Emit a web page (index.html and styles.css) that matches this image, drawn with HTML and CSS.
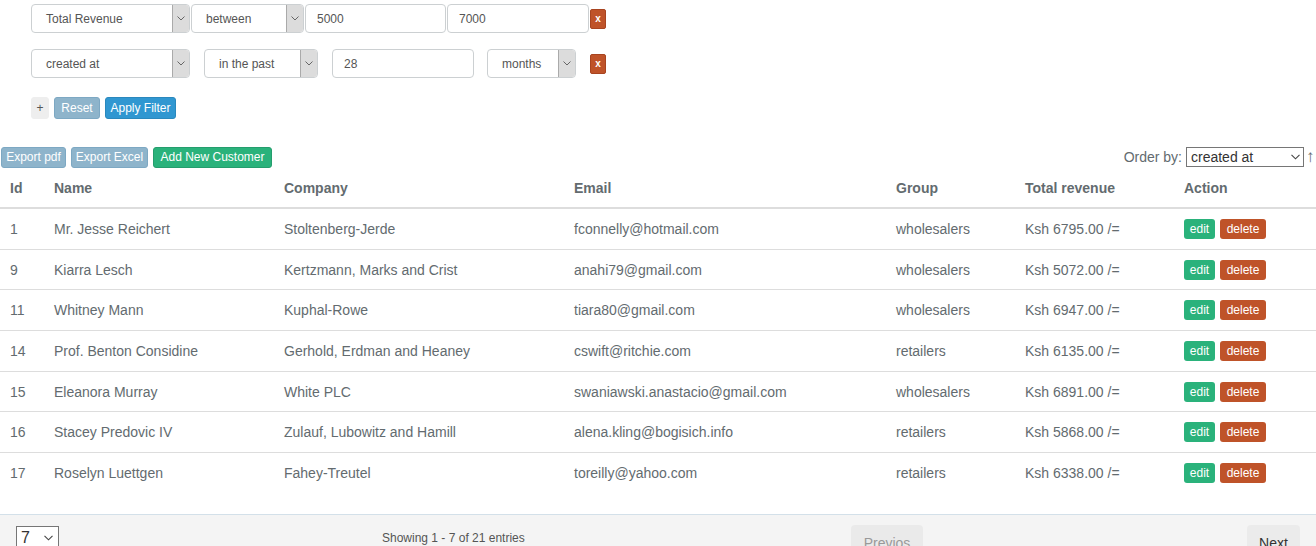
FILE: index.html
```html
<!DOCTYPE html>
<html>
<head>
<meta charset="utf-8">
<link rel="stylesheet" href="styles.css">
</head>
<body>
<div class="filters">
  <div class="frow r1">
    <div class="sel w159"><span class="sv">Total Revenue</span><span class="arr"><svg width="8" height="5" viewBox="0 0 8 5"><path d="M0.5 0.5 L4 4 L7.5 0.5" fill="none" stroke="#666" stroke-width="1"/></svg></span></div>
    <div class="sel w113"><span class="sv">between</span><span class="arr"><svg width="8" height="5" viewBox="0 0 8 5"><path d="M0.5 0.5 L4 4 L7.5 0.5" fill="none" stroke="#666" stroke-width="1"/></svg></span></div>
    <div class="inp w141">5000</div>
    <div class="inp w142">7000</div>
    <button class="xbtn">x</button>
  </div>
  <div class="frow r2">
    <div class="sel w159"><span class="sv">created at</span><span class="arr"><svg width="8" height="5" viewBox="0 0 8 5"><path d="M0.5 0.5 L4 4 L7.5 0.5" fill="none" stroke="#666" stroke-width="1"/></svg></span></div>
    <div class="sel w114"><span class="sv">in the past</span><span class="arr"><svg width="8" height="5" viewBox="0 0 8 5"><path d="M0.5 0.5 L4 4 L7.5 0.5" fill="none" stroke="#666" stroke-width="1"/></svg></span></div>
    <div class="inp w142">28</div>
    <div class="sel w89"><span class="sv">months</span><span class="arr"><svg width="8" height="5" viewBox="0 0 8 5"><path d="M0.5 0.5 L4 4 L7.5 0.5" fill="none" stroke="#666" stroke-width="1"/></svg></span></div>
    <button class="xbtn">x</button>
  </div>
  <div class="frow r3">
    <button class="btn btn-default">+</button>
    <button class="btn btn-info">Reset</button>
    <button class="btn btn-primary">Apply Filter</button>
  </div>
</div>

<div class="toolbar">
  <div class="tleft">
    <button class="btn btn-info">Export pdf</button>
    <button class="btn btn-info">Export Excel</button>
    <button class="btn btn-success">Add New Customer</button>
  </div>
  <div class="tright">
    <span class="olabel">Order by:</span>
    <div class="osel"><span>created at</span><svg width="9" height="6" viewBox="0 0 9 6"><path d="M0.5 0.8 L4.5 4.8 L8.5 0.8" fill="none" stroke="#444" stroke-width="1.1"/></svg></div>
    <span class="oarrow">↑</span>
  </div>
</div>

<table class="tbl">
  <colgroup>
    <col style="width:44px"><col style="width:230px"><col style="width:290px"><col style="width:322px"><col style="width:129px"><col style="width:159px"><col>
  </colgroup>
  <thead>
    <tr><th>Id</th><th>Name</th><th>Company</th><th>Email</th><th>Group</th><th>Total revenue</th><th>Action</th></tr>
  </thead>
  <tbody>
    <tr><td>1</td><td>Mr. Jesse Reichert</td><td>Stoltenberg-Jerde</td><td>fconnelly@hotmail.com</td><td>wholesalers</td><td>Ksh 6795.00 /=</td><td class="act"><button class="sbtn btn-success">edit</button><button class="sbtn btn-danger">delete</button></td></tr>
    <tr><td>9</td><td>Kiarra Lesch</td><td>Kertzmann, Marks and Crist</td><td>anahi79@gmail.com</td><td>wholesalers</td><td>Ksh 5072.00 /=</td><td class="act"><button class="sbtn btn-success">edit</button><button class="sbtn btn-danger">delete</button></td></tr>
    <tr><td>11</td><td>Whitney Mann</td><td>Kuphal-Rowe</td><td>tiara80@gmail.com</td><td>wholesalers</td><td>Ksh 6947.00 /=</td><td class="act"><button class="sbtn btn-success">edit</button><button class="sbtn btn-danger">delete</button></td></tr>
    <tr><td>14</td><td>Prof. Benton Considine</td><td>Gerhold, Erdman and Heaney</td><td>cswift@ritchie.com</td><td>retailers</td><td>Ksh 6135.00 /=</td><td class="act"><button class="sbtn btn-success">edit</button><button class="sbtn btn-danger">delete</button></td></tr>
    <tr><td>15</td><td>Eleanora Murray</td><td>White PLC</td><td>swaniawski.anastacio@gmail.com</td><td>wholesalers</td><td>Ksh 6891.00 /=</td><td class="act"><button class="sbtn btn-success">edit</button><button class="sbtn btn-danger">delete</button></td></tr>
    <tr><td>16</td><td>Stacey Predovic IV</td><td>Zulauf, Lubowitz and Hamill</td><td>alena.kling@bogisich.info</td><td>retailers</td><td>Ksh 5868.00 /=</td><td class="act"><button class="sbtn btn-success">edit</button><button class="sbtn btn-danger">delete</button></td></tr>
    <tr><td>17</td><td>Roselyn Luettgen</td><td>Fahey-Treutel</td><td>toreilly@yahoo.com</td><td>retailers</td><td>Ksh 6338.00 /=</td><td class="act"><button class="sbtn btn-success">edit</button><button class="sbtn btn-danger">delete</button></td></tr>
  </tbody>
</table>

<div class="footer">
  <div class="fc1"><div class="psel"><span>7</span><svg width="9" height="6" viewBox="0 0 9 6"><path d="M0.5 0.8 L4.5 4.8 L8.5 0.8" fill="none" stroke="#444" stroke-width="1.1"/></svg></div></div>
  <div class="fc2">Showing 1 - 7 of 21 entries</div>
  <div class="fc3"><button class="pbtn disabled">Previos</button></div>
  <div class="fc4"><button class="pbtn">Next</button></div>
</div>
</body>
</html>
```
FILE: styles.css
```css
* { box-sizing: border-box; }
html, body { margin: 0; padding: 0; background: #fff; }
body {
  font-family: "Liberation Sans", Arial, Helvetica, sans-serif;
  color: #636b6f;
  font-size: 14px;
  width: 1316px;
  height: 546px;
  overflow: hidden;
}
button { font-family: inherit; cursor: pointer; }

.filters { padding: 4px 0 0 31px; }
.frow { display: flex; align-items: center; }
.r1 { height: 29px; gap: 1px; }
.r2 { height: 29px; margin-top: 16px; gap: 14px; }
.r2 .inp { margin-right: -1px; }
.r3 { margin-top: 19px; gap: 4px; height: 22px; }

.sel, .inp {
  height: 29px;
  border: 1px solid #ccd0d2;
  border-radius: 4px;
  background: #fff;
  font-size: 12px;
  color: #555;
  display: flex;
  align-items: center;
}
.sel { padding-left: 14px; justify-content: space-between; overflow: hidden; }
.inp { padding-left: 11px; }
.sv { white-space: nowrap; }
.arr {
  width: 17px;
  height: 100%;
  background: #dcdcdc;
  border-left: 1px solid #aaa;
  display: flex;
  align-items: center;
  justify-content: center;
  flex: none;
}
.w159 { width: 159px; }
.w113 { width: 113px; }
.w114 { width: 114px; }
.w141 { width: 141px; }
.w142 { width: 142px; }
.w89 { width: 89px; }
.r2 .w89 { margin-right: -1px; }

.xbtn {
  width: 16px;
  height: 20px;
  padding: 0;
  border: 1px solid #a84420;
  border-radius: 2px;
  background: #bf5329;
  color: #fff;
  font-size: 10px;
  font-weight: bold;
  line-height: 18px;
}
.r2 .xbtn { margin-left: 1px; }

.btn {
  height: 21px;
  padding: 0 5px;
  font-size: 12px;
  line-height: 19px;
  border-radius: 3px;
  border: 1px solid transparent;
  color: #fff;
}
.r3 .btn { height: 22px; }
.btn-default { background: #eee; color: #555; border-color: #eee; width: 18px; padding: 0; }
.r3 .btn-info { width: 46px; padding: 0; margin-left: 1px; }
.r3 .btn-primary { width: 71px; padding: 0; margin-left: 1px; }
.btn-info { background: #8eb4cb; border-color: #7da8c3; }
.btn-primary { background: #3097d1; border-color: #2a88bd; }
.btn-success { background: #2ab27b; border-color: #259d6d; }
.btn-danger { background: #bf5329; border-color: #aa4a24; }

.toolbar {
  margin-top: 28px;
  display: flex;
  justify-content: space-between;
  align-items: flex-start;
  padding-left: 1px;
  height: 22px;
}
.tleft { display: flex; gap: 5px; }
.tleft .btn:nth-child(1) { width: 65px; padding: 0; }
.tleft .btn:nth-child(2) { width: 77px; padding: 0; }
.tleft .btn:nth-child(3) { width: 119px; padding: 0; }
.tright { display: flex; align-items: center; height: 20px; }
.olabel { font-size: 14px; color: #636b6f; margin-right: 4px; }
.osel {
  width: 118px;
  height: 20px;
  border: 1px solid #767676;
  display: flex;
  align-items: center;
  justify-content: space-between;
  padding: 0 3px 0 4px;
  font-size: 14px;
  color: #333;
}
.oarrow { margin-left: 2px; font-size: 17px; line-height: 20px; color: #636b6f; width: 10px; }

.tbl {
  width: 1316px;
  border-collapse: collapse;
  table-layout: fixed;
  margin-bottom: 21px;
}
.tbl th {
  text-align: left;
  font-weight: bold;
  padding: 9px 10px;
  line-height: 20px;
  border-bottom: 2px solid #ddd;
  color: #636b6f;
  font-size: 14px;
}
.tbl td {
  padding: 10px 10px 9.7px;
  line-height: 20px;
  font-size: 14px;
  white-space: nowrap;
}
.tbl tbody tr + tr td { border-top: 1px solid #ddd; }
.tbl td.act { font-size: 0; line-height: 20px; }
.sbtn {
  display: inline-block;
  height: 20px;
  font-size: 12px;
  line-height: 18px;
  padding: 0;
  border-radius: 3px;
  border: 1px solid transparent;
  color: #fff;
  vertical-align: top;
  margin-right: 5px;
}
.sbtn.btn-success { width: 31px; }
.sbtn.btn-danger { width: 46px; }

.footer {
  border-top: 1px solid #d3e0e9;
  background: #f4f4f4;
  height: 40px;
  display: grid;
  grid-template-columns: 366px 469px 396px 1fr;
  padding: 10px 0 0 16px;
  align-items: start;
}
.psel {
  width: 43px;
  height: 24px;
  border: 1px solid #767676;
  background: #fff;
  display: flex;
  align-items: center;
  justify-content: space-between;
  padding: 0 5px 0 4px;
  font-size: 16px;
  color: #333;
  margin-top: 1px;
}
.fc2 { font-size: 12px; color: #555; padding-top: 6px; line-height: 14px; }
.pbtn {
  height: 32px;
  font-size: 14px;
  border: none;
  border-radius: 4px;
  background: #ebebeb;
  color: #333;
  line-height: 32px;
  padding: 2px 0 0;
}
.pbtn.disabled { background: #eaeaea; color: #999; width: 72px; }
.fc4 .pbtn { width: 53px; }
```
